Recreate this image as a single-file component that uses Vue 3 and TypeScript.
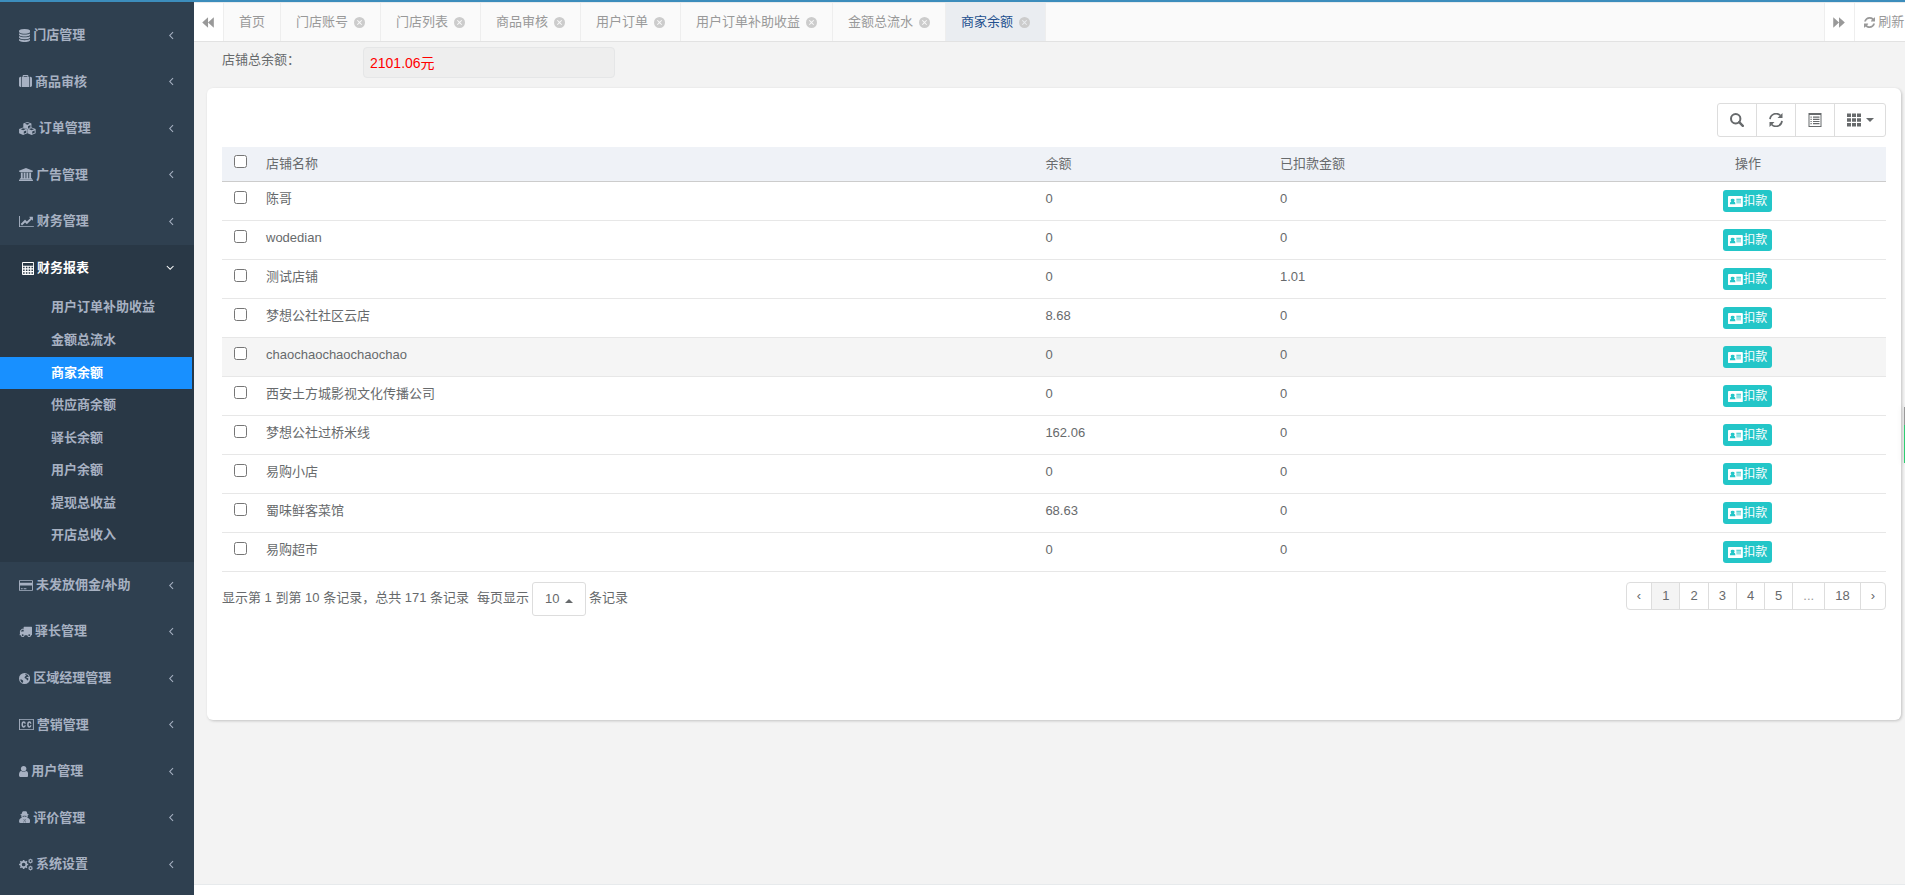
<script setup lang="ts">
import { ref } from 'vue'

interface Icon { w: number; d: string }
interface MenuItem { label: string; icon: string; children?: string[] }
interface Shop { name: string; balance: string; deducted: string }

const circle = (cx: number, cy: number, r: number): string =>
  `M${cx - r} ${cy}a${r} ${r} 0 1 0 ${2 * r} 0a${r} ${r} 0 1 0 ${-2 * r} 0z`
const rect = (x: number, y: number, w: number, h: number): string => `M${x} ${y}h${w}v${h}h${-w}z`

const gear = (cx: number, cy: number, r: number, hole: number): string => {
  const points: string[] = []
  for (let i = 0; i < 8; i++) {
    const a = (i * Math.PI) / 4
    for (const [offset, k] of [[-0.24, 0.78], [-0.17, 1], [0.17, 1], [0.24, 0.78]]) {
      points.push(`${Math.round(cx + r * k * Math.cos(a + offset))} ${Math.round(cy + r * k * Math.sin(a + offset))}`)
    }
  }
  return `M${points.join('L')}z${circle(cx, cy, hole)}`
}

const cube = (cx: number, cy: number): string => {
  const hw = 560
  const r = 520
  const poly = (pts: number[][]): string =>
    `M${pts.map(([x, y]) => `${Math.round(cx + x * hw)} ${Math.round(cy + y * r)}`).join('L')}z`
  return (
    poly([[0, -1], [1, -0.6], [1, 0.55], [0, 1], [-1, 0.55], [-1, -0.6]]) +
    poly([[0, -0.78], [0.6, -0.52], [0, -0.26], [-0.6, -0.52]]) +
    poly([[0.16, 0.1], [0.76, -0.18], [0.76, 0.4], [0.16, 0.68]])
  )
}

const icons: Record<string, Icon> = {
  database: { w: 1536, d: 'M768 768q237 0 443-43t325-127v170q0 69-103 128t-280 93.5-385 34.5-385-34.5-280-93.5-103-128v-170q119 84 325 127t443 43zm0 768q237 0 443-43t325-127v170q0 69-103 128t-280 93.5-385 34.5-385-34.5-280-93.5-103-128v-170q119 84 325 127t443 43zm0-384q237 0 443-43t325-127v170q0 69-103 128t-280 93.5-385 34.5-385-34.5-280-93.5-103-128v-170q119 84 325 127t443 43zm0-1152q208 0 385 34.5t280 93.5 103 128v128q0 69-103 128t-280 93.5-385 34.5-385-34.5-280-93.5-103-128v-128q0-69 103-128t280-93.5 385-34.5z' },
  suitcase: { w: 1792, d: 'M640 256h512v-128h-512v128zm-352 0v1408h-64q-92 0-158-66t-66-158v-960q0-92 66-158t158-66h64zm1120 0v1408h-1024v-1408h128v-160q0-40 28-68t68-28h576q40 0 68 28t28 68v160h128zm384 224v960q0 92-66 158t-158 66h-64v-1408h64q92 0 158 66t66 158z' },
  cubes: { w: 2304, d: cube(1152, 520) + cube(570, 1270) + cube(1734, 1270) },
  bank: { w: 1920, d: 'M960 0l960 384v128h-128q0 26-20.5 45t-48.5 19h-1526q-28 0-48.5-19t-20.5-45h-128v-128zm-704 640h256v768h128v-768h256v768h128v-768h256v768h128v-768h256v768h59q28 0 48.5 19t20.5 45v64h-1664v-64q0-26 20.5-45t48.5-19h59v-768zm1595 960q28 0 48.5 19t20.5 45v128h-1920v-128q0-26 20.5-45t48.5-19h1782z' },
  chart: { w: 2048, d: 'M2048 1536v128h-2048v-1536h128v1408h1920zm-128-1248v435q0 21-19.5 29.5t-35.5-7.5l-121-121-633 633q-10 10-23 10t-23-10l-233-233-416 416-192-192 585-585q10-10 23-10t23 10l233 233 464-464-121-121q-16-16-7.5-35.5t29.5-19.5h435q14 0 23 9t9 23z' },
  calculator: {
    w: 1664,
    d: 'M128 0h1408q128 0 128 128v1536q0 128-128 128h-1408q-128 0-128-128v-1536q0-128 128-128z' + rect(128, 128, 1408, 384) +
      [640, 1024, 1408].map((y) => [150, 534, 918, 1302].map((x) => rect(x, y, 212, 212)).join('')).join(''),
  },
  card: { w: 1920, d: 'M160 128h1600q160 0 160 160v1216q0 160-160 160h-1600q-160 0-160-160v-1216q0-160 160-160zM128 256v256h1664v-256zM128 896v640h1664v-640z' + rect(256, 1280, 256, 128) + rect(640, 1280, 384, 128) },
  truck: { w: 1792, d: 'M640 1408q0-52-38-90t-90-38-90 38-38 90 38 90 90 38 90-38 38-90zm-384-512h384v-256h-158q-13 0-22 9l-195 195q-9 9-9 22v30zm1280 512q0-52-38-90t-90-38-90 38-38 90 38 90 90 38 90-38 38-90zm256-1088v1024q0 15-4 26.5t-13.5 18.5-16.5 11.5-23.5 6-22.5 2-25.5 0-22.5-.5q0 106-75 181t-181 75-181-75-75-181h-384q0 106-75 181t-181 75-181-75-75-181h-64q-3 0-22.5.5t-25.5 0-22.5-2-23.5-6-16.5-11.5-13.5-18.5-4-26.5q0-26 19-45t45-19v-320q0-8-.5-35t0-38 2.5-34.5 6.5-37 14-30.5 22.5-30l198-198q19-19 50.5-32t58.5-13h160v-192q0-26 19-45t45-19h1024q26 0 45 19t19 45z' },
  globe: { w: 1536, d: circle(768, 896, 768) + 'M880 300l260 60 190 220-60 150-150-60-120 110 130 60 150 20 10 190-130 110-60-10-100-220-190-60-50-130 110-150 150-60-80-110-120 20zM200 1000l150 40 200 120 40 130-110 210-170-130-110-200z' },
  cc: { w: 2048, d: 'M0 128h2048v1536h-2048zM128 256v1280h1792v-1280z' + 'M940 780h-190q-10-120-90-120-110 0-110 236t110 236q85 0 95-130h190q-20 330-290 330-310 0-310-436t310-436q275 0 285 320zM1720 780h-190q-10-120-90-120-110 0-110 236t110 236q85 0 95-130h190q-20 330-290 330-310 0-310-436t310-436q275 0 285 320z' },
  user: { w: 1280, d: 'M1280 1399q0 109-62.5 187t-150.5 78h-854q-88 0-150.5-78t-62.5-187q0-85 8.5-160.5t31.5-152 58.5-131 94-89 134.5-34.5q131 128 313 128t313-128q76 0 134.5 34.5t94 89 58.5 131 31.5 152 8.5 160.5zm-256-887q0 159-112.5 271.5t-271.5 112.5-271.5-112.5-112.5-271.5 112.5-271.5 271.5-112.5 271.5 112.5 112.5 271.5z' },
  secret: { w: 1536, d: 'M460 130q40-130 150-110 160 60 310 0 120-20 160 110l90 290 170 60q60 60-120 120l-30 10 20 170-70 150 180 60q216 120 216 420 0 254-220 254h-1100q-216 0-216-254 0-300 216-420l170-60-70-150 20-170-30-10q-180-60-120-120l170-60zM450 690l50 80 180 10 60-70h56l60 70 180-10 50-80-316-30zM600 1120l100 120-70 360h60l50-340-50-140zM936 1120l-100 120 70 360h-60l-50-340 50-140z' },
  cogs: { w: 1920, d: gear(640, 896, 640, 256) + gear(1590, 420, 330, 128) + gear(1590, 1390, 330, 128) },
  left: { w: 640, d: 'M510 390l100 100-410 410 410 410-100 100-510-510z' },
  down: { w: 1152, d: 'M66 600l100-100 410 410 410-410 100 100-510 510z' },
  backward: { w: 1664, d: 'M832 160v1472l-800-736zM1632 160v1472l-800-736z' },
  forward: { w: 1664, d: 'M32 160v1472l800-736zM832 160v1472l800-736z' },
  close: { w: 1536, d: circle(768, 896, 768) + 'M500 538l268 268 268-268 90 90-268 268 268 268-90 90-268-268-268 268-90-90 268-268-268-268z' },
  refresh: { w: 1536, d: 'M1511 1056q0 5-1 7-64 268-268 434.5t-478 166.5q-146 0-282.5-55t-243.5-157l-129 129q-19 19-45 19t-45-19-19-45v-448q0-26 19-45t45-19h448q26 0 45 19t19 45-19 45l-137 137q71 66 161 102t187 36q134 0 250-65t186-179q11-17 53-117 8-23 30-23h192q13 0 22.5 9.5t9.5 22.5zm25-800v448q0 26-19 45t-45 19h-448q-26 0-45-19t-19-45 19-45l138-138q-148-137-349-137-134 0-250 65t-186 179q-11 17-53 117-8 23-30 23h-199q-13 0-22.5-9.5t-9.5-22.5v-7q65-268 270-434.5t480-166.5q146 0 284 55.5t245 156.5l130-129q19-19 45-19t45 19 19 45z' },
  idcard: { w: 2048, d: 'M128 128h1792q128 0 128 128v1280q0 128-128 128h-1792q-128 0-128-128v-1280q0-128 128-128zM256 1280h768q0-360-200-380 90-70 90-200 0-200-274-200t-274 200q0 130 90 200-200 20-200 380z' + rect(1152, 512, 640, 128) + rect(1152, 768, 640, 128) + rect(1152, 1024, 640, 128) },
}

const menu: MenuItem[] = [
  { label: '门店管理', icon: 'database' },
  { label: '商品审核', icon: 'suitcase' },
  { label: '订单管理', icon: 'cubes' },
  { label: '广告管理', icon: 'bank' },
  { label: '财务管理', icon: 'chart' },
  {
    label: '财务报表',
    icon: 'calculator',
    children: ['用户订单补助收益', '金额总流水', '商家余额', '供应商余额', '驿长余额', '用户余额', '提现总收益', '开店总收入'],
  },
  { label: '未发放佣金/补助', icon: 'card' },
  { label: '驿长管理', icon: 'truck' },
  { label: '区域经理管理', icon: 'globe' },
  { label: '营销管理', icon: 'cc' },
  { label: '用户管理', icon: 'user' },
  { label: '评价管理', icon: 'secret' },
  { label: '系统设置', icon: 'cogs' },
]

const tabs = ['首页', '门店账号', '门店列表', '商品审核', '用户订单', '用户订单补助收益', '金额总流水', '商家余额']
const current = ref('商家余额')

const shops: Shop[] = [
  { name: '陈哥', balance: '0', deducted: '0' },
  { name: 'wodedian', balance: '0', deducted: '0' },
  { name: '测试店铺', balance: '0', deducted: '1.01' },
  { name: '梦想公社社区云店', balance: '8.68', deducted: '0' },
  { name: 'chaochaochaochaochao', balance: '0', deducted: '0' },
  { name: '西安土方城影视文化传播公司', balance: '0', deducted: '0' },
  { name: '梦想公社过桥米线', balance: '162.06', deducted: '0' },
  { name: '易购小店', balance: '0', deducted: '0' },
  { name: '蜀味鲜客菜馆', balance: '68.63', deducted: '0' },
  { name: '易购超市', balance: '0', deducted: '0' },
]
const highlighted = 4
const selected = ref<string[]>([])
const toggleAll = (e: Event): void => {
  selected.value = (e.target as HTMLInputElement).checked ? shops.map((s) => s.name) : []
}

const pages = ['‹', '1', '2', '3', '4', '5', '...', '18', '›']
const page = ref('1')
const pageSize = ref('10')
const total = '2101.06元'
</script>

<template>
  <div class="app">
    <nav class="sidebar">
      <ul class="menu">
        <li v-for="item in menu" :key="item.label" :class="{ open: item.children }">
          <a href="#" class="menu-link">
            <svg class="ico" :viewBox="`0 0 ${icons[item.icon].w} 1792`"><path fill-rule="evenodd" :d="icons[item.icon].d" /></svg>
            <span>{{ item.label }}</span>
            <svg v-if="item.children" class="ico arrow" viewBox="0 0 1152 1792"><path :d="icons.down.d" /></svg>
            <svg v-else class="ico arrow" viewBox="0 0 640 1792"><path :d="icons.left.d" /></svg>
          </a>
          <ul v-if="item.children" class="submenu">
            <li v-for="child in item.children" :key="child">
              <a href="#" :class="{ active: child === current }">{{ child }}</a>
            </li>
          </ul>
        </li>
      </ul>
    </nav>

    <div class="main">
      <header class="tabbar">
        <button class="roll roll-left" aria-label="向左滚动">
          <svg class="ico" viewBox="0 0 1664 1792"><path :d="icons.backward.d" /></svg>
        </button>
        <div class="tabs">
          <a v-for="tab in tabs" :key="tab" href="#" class="tab" :class="{ active: tab === current }">
            {{ tab }}
            <svg v-if="tab !== '首页'" class="ico close" viewBox="0 0 1536 1792"><path fill-rule="evenodd" :d="icons.close.d" /></svg>
          </a>
        </div>
        <button class="roll" aria-label="向右滚动">
          <svg class="ico" viewBox="0 0 1664 1792"><path :d="icons.forward.d" /></svg>
        </button>
        <button class="roll reload">
          <svg class="ico" viewBox="0 0 1536 1792"><path :d="icons.refresh.d" /></svg>
          <span>刷新</span>
        </button>
      </header>

      <main class="content">
        <div class="summary">
          <label for="total">店铺总余额：</label>
          <input id="total" type="text" :value="total" readonly />
        </div>

        <section class="card">
          <div class="toolbar">
            <div class="group">
              <button aria-label="搜索">
                <svg class="glyph" viewBox="0 0 14 14"><circle cx="5.7" cy="5.7" r="4.7" fill="none" stroke="currentColor" stroke-width="2" /><path d="M9.200 9.200l3.600 3.600" stroke="currentColor" stroke-width="2.4" stroke-linecap="round" /></svg>
              </button>
              <button aria-label="刷新表格">
                <svg class="glyph" viewBox="0 0 14 14"><path d="M1 6.200a6.100 6.100 0 0 1 10.400-3.700M13 7.800a6.100 6.100 0 0 1-10.400 3.700" fill="none" stroke="currentColor" stroke-width="1.700" /><path d="M13.500 0v5h-5zM.5 14v-5h5z" fill="currentColor" /></svg>
              </button>
              <button aria-label="切换视图">
                <svg class="glyph" viewBox="0 0 14 14"><path fill="currentColor" fill-rule="evenodd" d="M.5 0h13v14h-13zM1.500 2v11h11v-11zM2.500 3.500h1.200v1.200h-1.200zM5 3.500h6.500v1.200h-6.500zM2.500 5.700h1.200v1.200h-1.200zM5 5.700h6.500v1.200h-6.500zM2.500 7.900h1.200v1.200h-1.200zM5 7.900h6.500v1.200h-6.500zM2.500 10.100h1.200v1.200h-1.200zM5 10.100h6.500v1.200h-6.500z" /></svg>
              </button>
              <button class="columns" aria-label="列">
                <svg class="glyph" viewBox="0 0 14 14"><path fill="currentColor" d="M0 .5h4v3.500h-4zM5 .5h4v3.500h-4zM10 .5h4v3.500h-4zM0 5.200h4v3.600h-4zM5 5.200h4v3.600h-4zM10 5.200h4v3.600h-4zM0 10h4v3.500h-4zM5 10h4v3.500h-4zM10 10h4v3.500h-4z" /></svg>
                <span class="caret"></span>
              </button>
            </div>
          </div>

          <table class="grid">
            <colgroup>
              <col class="c-check" />
              <col />
              <col class="c-balance" />
              <col class="c-deducted" />
              <col class="c-action" />
            </colgroup>
            <thead>
              <tr>
                <th class="check"><input type="checkbox" aria-label="全选" @change="toggleAll" /></th>
                <th>店铺名称</th>
                <th>余额</th>
                <th>已扣款金额</th>
                <th class="action">操作</th>
              </tr>
            </thead>
            <tbody>
              <tr v-for="(shop, i) in shops" :key="shop.name" :class="{ hover: i === highlighted }">
                <td class="check"><input v-model="selected" type="checkbox" :value="shop.name" :aria-label="shop.name" /></td>
                <td>{{ shop.name }}</td>
                <td>{{ shop.balance }}</td>
                <td>{{ shop.deducted }}</td>
                <td class="action">
                  <button class="deduct">
                    <svg class="ico" viewBox="0 0 2048 1792"><path fill-rule="evenodd" :d="icons.idcard.d" /></svg>扣款
                  </button>
                </td>
              </tr>
            </tbody>
          </table>

          <div class="footer">
            <span class="info">显示第 1 到第 10 条记录，总共 171 条记录</span>
            <label for="size">每页显示</label>
            <span class="size">
              <select id="size" v-model="pageSize">
                <option>10</option>
                <option>25</option>
                <option>50</option>
              </select>
              <span class="caret up"></span>
            </span>
            <span>条记录</span>
            <ul class="pager">
              <li v-for="p in pages" :key="p">
                <a href="#" :class="{ active: p === page, dots: p === '...' }">{{ p }}</a>
              </li>
            </ul>
          </div>
        </section>
      </main>

      <footer class="bottom"></footer>
    </div>
    <div class="dock"></div>
  </div>
</template>

<style>
body {
  margin: 0;
  overflow: hidden;
}
</style>

<style scoped>
* {
  box-sizing: border-box;
}

.app {
  display: flex;
  min-height: 100vh;
  border-top: 2px solid #3c8dbc;
  background: #f3f3f3;
  color: #676a6c;
  font-family: "Liberation Sans", "Noto Sans CJK SC", sans-serif;
  font-size: 13px;
  line-height: 1.42857;
}

a {
  color: inherit;
  text-decoration: none;
}

ul {
  margin: 0;
  padding: 0;
  list-style: none;
}

button,
input,
select {
  margin: 0;
  font: inherit;
  color: inherit;
}

.ico {
  flex: none;
  height: 13px;
  width: auto;
  fill: currentColor;
}

.sidebar {
  flex: none;
  width: 194px;
  padding-top: 10px;
  background: #2f4050;
  color: #a7b1c2;
  font-weight: 600;
}

.menu-link {
  display: flex;
  align-items: center;
  gap: 3px;
  padding: 14px 20px 14px 19px;
}

.arrow {
  margin-left: auto;
}

.open {
  padding-bottom: 10px;
  background: #293846;
}

.open .menu-link {
  padding-left: 22px;
  color: #fff;
}

.submenu a {
  display: block;
  margin-right: 2px;
  padding: 7px 10px 7px 51px;
}

.submenu .active {
  background: #1890ff;
  color: #fff;
}

.main {
  flex: 1;
  min-width: 0;
  display: flex;
  flex-direction: column;
}

.tabbar {
  display: flex;
  height: 40px;
  border-top: 1px solid #e7eaec;
  border-bottom: 1px solid #e2e2e2;
  background: #fafafa;
  color: #999;
}

.roll {
  flex: none;
  display: flex;
  align-items: center;
  justify-content: center;
  width: 30px;
  padding: 0;
  border: 0;
  border-left: 1px solid #eee;
  background: #fff;
}

.roll-left {
  border-left: 0;
  border-right: 1px solid #eee;
}

.reload {
  gap: 3px;
  width: 51px;
  padding-left: 9px;
  justify-content: flex-start;
  white-space: nowrap;
}

.tabs {
  flex: 1;
  display: flex;
  min-width: 0;
  overflow: hidden;
}

.tab {
  display: flex;
  align-items: center;
  gap: 6px;
  padding: 0 15px;
  border-right: 1px solid #eee;
}

.tab.active {
  background: #eaedf1;
  color: #23508e;
}

.close {
  width: 11px;
  color: #ccc;
}

.content {
  flex: 1;
  padding: 5px 4px 20px 13px;
}

.summary {
  display: flex;
  padding-left: 15px;
}

.summary label {
  width: 141px;
  padding-top: 4px;
}

.summary input {
  width: 252px;
  height: 31px;
  padding: 0 6px 2px;
  border: 1px solid #e5e6e7;
  border-radius: 4px;
  background: #eee;
  color: #f00;
  font-size: 14px;
}

.card {
  margin-top: 10px;
  padding: 15px 15px 104px;
  border-radius: 6px;
  background: #fff;
  box-shadow: 1px 1px 3px rgba(0, 0, 0, 0.2);
}

.toolbar {
  display: flex;
  justify-content: flex-end;
  margin-bottom: 10px;
}

.group {
  display: flex;
  border: 1px solid #ddd;
  border-radius: 3px;
}

.group button {
  display: flex;
  align-items: center;
  justify-content: center;
  gap: 5px;
  width: 39px;
  height: 32px;
  padding: 0;
  border: 0;
  border-left: 1px solid #ddd;
  background: transparent;
}

.group button:first-child {
  width: 38px;
  border-left: 0;
}

.group .columns {
  width: 51px;
}

.glyph {
  width: 14px;
  height: 14px;
}

.caret {
  border: 4px solid transparent;
  border-top-color: currentColor;
  border-bottom: 0;
}

.caret.up {
  border-top: 0;
  border-bottom: 4px solid currentColor;
}

.grid {
  width: 100%;
  table-layout: fixed;
  border-collapse: separate;
  border-spacing: 0;
  line-height: 18px;
}

.c-check {
  width: 36px;
}

.c-balance {
  width: 14.1%;
}

.c-deducted {
  width: 20.3%;
}

.c-action {
  width: 16.6%;
}

.grid th,
.grid td {
  padding: 8px;
  border-bottom: 1px solid #e7e7e7;
  text-align: left;
  vertical-align: top;
  font-weight: 400;
}

.grid th {
  background: #eff2f7;
  border-bottom-color: #ccc;
}

.grid .check {
  padding: 8px 0 0 12px;
  line-height: 0;
}

.grid .check input {
  width: 13px;
  height: 13px;
}

.grid td.check {
  padding-top: 9px;
}

.grid .action {
  text-align: center;
}

.hover td {
  background: #f5f5f5;
}

.deduct {
  display: inline-flex;
  align-items: center;
  justify-content: center;
  height: 22px;
  padding: 0 5px;
  border: 0;
  border-radius: 3px;
  background: #23c6c8;
  color: #fff;
  font-size: 12px;
  vertical-align: top;
}

.footer {
  display: flex;
  align-items: flex-start;
  gap: 3px;
  padding-top: 10px;
  line-height: 32px;
}

.info {
  margin-right: 5px;
}

.size {
  position: relative;
  display: flex;
}

.size select {
  appearance: none;
  width: 54px;
  height: 34px;
  padding: 0 12px;
  border: 1px solid #ddd;
  border-radius: 3px;
  background: #fff;
}

.size .caret {
  position: absolute;
  right: 13px;
  top: 17px;
}

.pager {
  display: flex;
  margin-left: auto;
  border: 1px solid #ddd;
  border-radius: 4px;
  line-height: 26px;
}

.pager li + li {
  border-left: 1px solid #ddd;
}

.pager a {
  display: block;
  padding: 0 10px;
}

.pager .active {
  background: #f4f4f4;
}

.pager .dots {
  color: #999;
}

.bottom {
  height: 11px;
  border-top: 1px solid #e7eaec;
  background: #fff;
}

.dock {
  position: fixed;
  top: 407px;
  right: 0;
  width: 1px;
  height: 56px;
  background: linear-gradient(#999 18px, #2ecc71 18px);
  box-shadow: 0 0 6px rgba(0, 0, 0, 0.3);
}
</style>
